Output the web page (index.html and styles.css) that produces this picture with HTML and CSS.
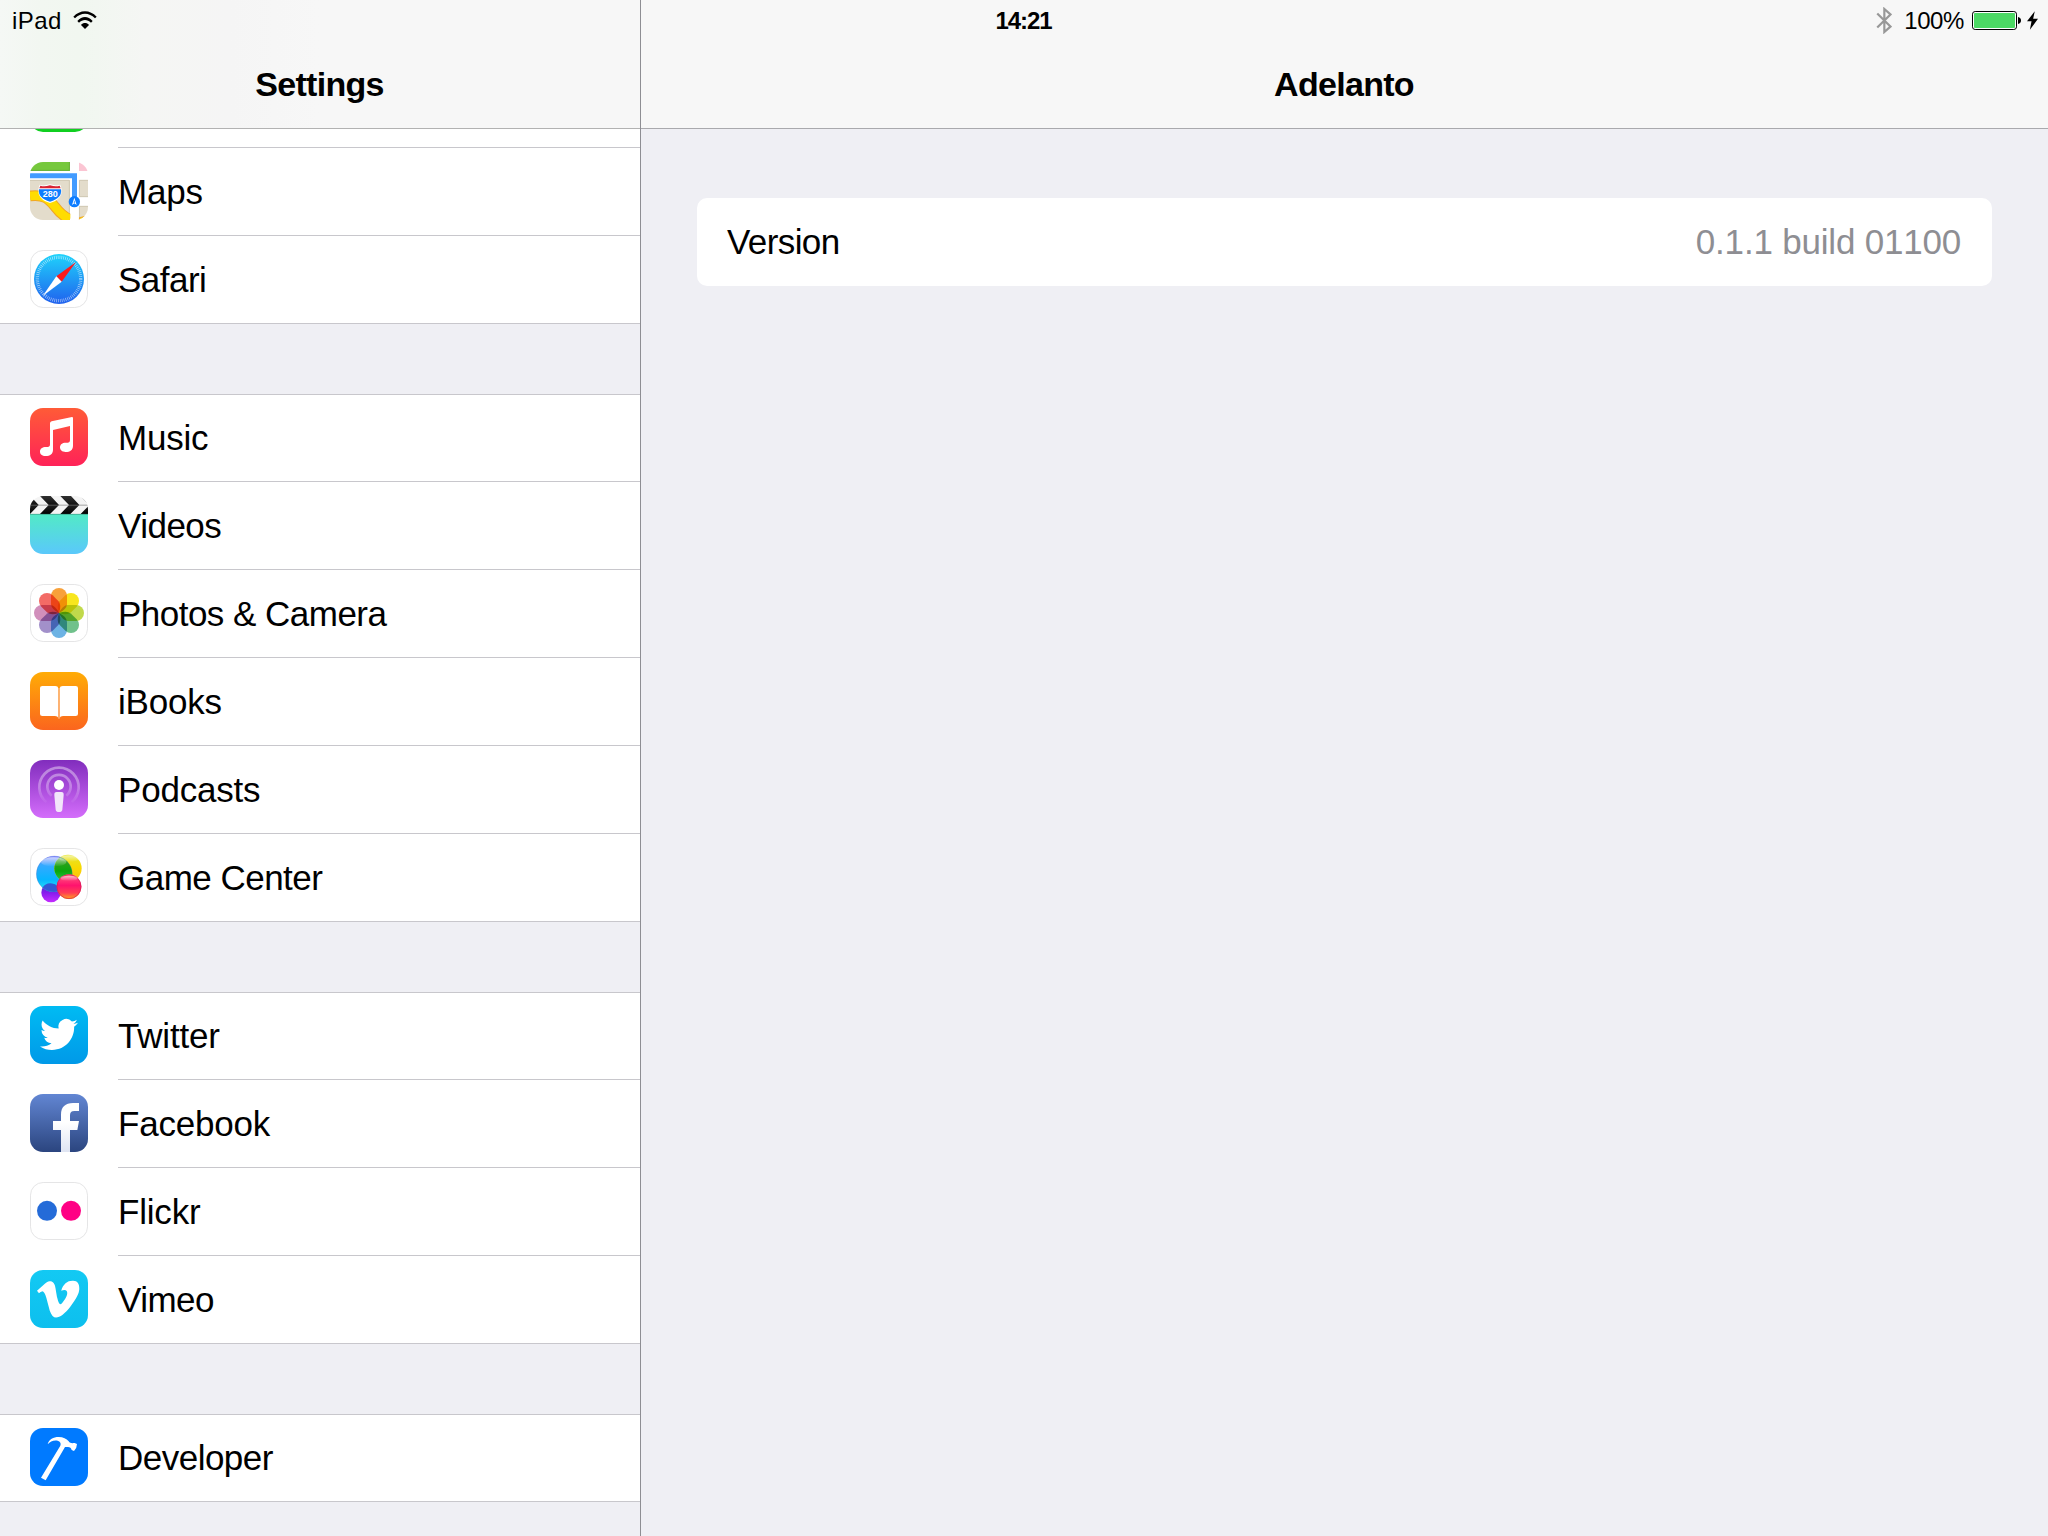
FILE: index.html
```html
<!DOCTYPE html>
<html lang="en">
<head>
<meta charset="utf-8">
<title>Settings</title>
<link rel="stylesheet" href="styles.css">
</head>
<body>
<div class="screen">
  <header class="status">
    <div class="status-side">
      <span class="device">iPad</span>
      <svg class="wifi" viewBox="0 0 72 54"><path d="M1 17C21-5 51-5 71 17L66 22C48 4 24 4 6 22ZM13 30C27 14 45 14 59 30L54 35C43 24 29 24 18 35ZM24 42C31 34 41 34 48 42L36 54Z"/></svg>
    </div>
    <span class="clock">14:21</span>
    <div class="status-side status-right">
      <svg class="bluetooth" viewBox="0 0 46 80"><path d="M3 19L42 58L24 74V6L42 22L3 61" fill="none" stroke="#989898" stroke-width="6.500"/></svg>
      <span class="percent">100%</span>
      <svg class="battery" viewBox="0 0 147 57"><rect x="1.5" y="1.5" width="132" height="54" rx="8" fill="#fff" stroke="#000" stroke-width="3"/><rect x="6" y="6" width="123" height="45" rx="3" fill="#4cd964"/><path d="M138 18Q147 20 147 28.500T138 39Z"/></svg>
      <svg class="bolt" viewBox="0 0 34 57"><path d="M24 0L0 31H14L9 57L34 23H19Z"/></svg>
    </div>
  </header>

  <aside class="sidebar">
    <div class="bar bar-side"><h1>Settings</h1></div>
    <nav class="list">
      <ul class="group group-first">
        <li class="row row-cut"><svg class="icon" viewBox="0 0 174 174"><rect width="174" height="174" rx="39" fill="#10cf20"/></svg></li>
        <li class="row">
          <svg class="icon" viewBox="0 0 174 174">
            <defs><clipPath id="tile"><rect width="174" height="174" rx="39"/></clipPath></defs>
            <g clip-path="url(#tile)">
              <rect width="174" height="174" fill="#fff"/>
              <path d="M0 0H120V27H0Z" fill="#76c83d"/><path d="M0 25H118V0" fill="none" stroke="#6aaf3c" stroke-width="3"/>
              <path d="M147 0H174V27H147Z" fill="#fbc5d3"/>
              <path d="M0 54H120V174H0ZM147 54H174V105H147ZM147 132H174V174H147Z" fill="#e3dccb"/>
              <path d="M0 55H118V174M174 55H148V104H174M174 133H148V174" fill="none" stroke="#cfc8b4" stroke-width="3"/>
              <path d="M0 102C45 96 58 114 75 134C88 151 102 164 120 172" fill="none" stroke="#f0a527" stroke-width="32"/>
              <path d="M0 102C45 96 58 114 75 134C88 151 102 164 120 172" fill="none" stroke="#ffdc00" stroke-width="26"/>
              <path d="M148 174V167Q160 165 174 160V174Z" fill="#ffdc00" stroke="#f0a527" stroke-width="3"/>
              <path d="M121 54H146V174H121Z" fill="#fff"/>
              <path d="M0 41H133.500V110" fill="none" stroke="#429bff" stroke-width="15"/>
              <path d="M29 68Q40 73 60 67Q80 73 91 68Q98 82 94 96Q87 116 60 123Q33 116 26 96Q22 82 29 68Z" fill="#fff"/>
              <path d="M31 71Q43 75 60 70Q77 75 89 71L92 79H28Z" fill="#d92332"/>
              <path d="M27 82H93Q97 109 60 119Q23 109 27 82Z" fill="#0d7dff"/>
              <text x="60.500" y="104" text-anchor="middle" class="shield">280</text>
              <circle cx="133" cy="119" r="17" fill="#0d7dff"/><path d="M133 107L140 129L133 124L126 129Z" fill="#fff"/><path d="M133 115L135 122L131 122Z" fill="#0d7dff"/>
            </g>
          </svg>
          <span class="label">Maps</span>
        </li>
        <li class="row">
          <svg class="icon" viewBox="0 0 174 174">
            <defs><linearGradient id="compass" x2="0" y2="1"><stop stop-color="#1fd3fb"/><stop offset="1" stop-color="#2061ee"/></linearGradient></defs>
            <rect x="1.500" y="1.500" width="171" height="171" rx="38" class="outline"/>
            <circle cx="87" cy="87" r="75" fill="url(#compass)"/>
            <circle cx="87" cy="87" r="65" fill="none" stroke="#fff" stroke-opacity=".62" stroke-width="10" stroke-dasharray="2 3.673"/>
            <path d="M138 36L79 79L95 95Z" fill="#fc1a1c"/><path d="M79 79L95 95L38 138Z" fill="#fff"/>
          </svg>
          <span class="label label-snug">Safari</span>
        </li>
      </ul>

      <ul class="group">
        <li class="row">
          <svg class="icon" viewBox="0 0 174 174">
            <defs><linearGradient id="music" x2="0" y2="1"><stop stop-color="#ff5b37"/><stop offset="1" stop-color="#ff2258"/></linearGradient></defs>
            <rect width="174" height="174" rx="39" fill="url(#music)"/>
            <path d="M60 46Q60 41 65 40L126 27Q129 27 129 30V113C129 126 120 132 107 132C96 132 90 126 90 118C90 109 97 104 107 104H114Q120 104 120 97V54L69 66V125C69 138 60 144 47 144C36 144 30 138 30 131C30 122 37 117 48 117H53Q60 117 60 109Z" fill="#fff"/>
          </svg>
          <span class="label">Music</span>
        </li>
        <li class="row">
          <svg class="icon" viewBox="0 0 174 174">
            <defs>
              <linearGradient id="video" x2="0" y2="1"><stop stop-color="#52eac6"/><stop offset="1" stop-color="#5ac8fb"/></linearGradient>
              <linearGradient id="slate" x2="0" y2="1"><stop stop-color="#303030"/><stop offset=".5" stop-color="#111"/><stop offset=".51" stop-color="#222"/><stop offset="1" stop-color="#000"/></linearGradient>
            </defs>
            <g clip-path="url(#tile)">
              <rect width="174" height="54" fill="#f4f4f4"/>
              <path d="M-31 0H1L26 27L0 54H-31ZM30 0H62L87 27L60 54H30L56 27ZM91 0H123L148 27L121 54H91L117 27ZM178 27L184 54H152Z" fill="url(#slate)"/>
              <path d="M0 27.500H174M152 0L178 27" stroke="#777" stroke-width="2"/>
              <rect y="54" width="174" height="120" fill="url(#video)"/>
              <path d="M0 55H174" stroke="#3c9480" stroke-width="2"/>
            </g>
          </svg>
          <span class="label label-snug">Videos</span>
        </li>
        <li class="row">
          <svg class="icon petals" viewBox="0 0 174 174">
            <rect x="1.500" y="1.500" width="171" height="171" rx="38" class="outline"/>
            <path d="M63 36A24 24 0 0 1 111 36V61Q110 76 87 87Q64 76 63 61Z" fill="#f8a13a"/>
            <path d="M63 36A24 24 0 0 1 111 36V61Q110 76 87 87Q64 76 63 61Z" fill="#f8e61e" transform="rotate(45 87 87)"/>
            <path d="M63 36A24 24 0 0 1 111 36V61Q110 76 87 87Q64 76 63 61Z" fill="#c1d94b" transform="rotate(90 87 87)"/>
            <path d="M63 36A24 24 0 0 1 111 36V61Q110 76 87 87Q64 76 63 61Z" fill="#70c18b" transform="rotate(135 87 87)"/>
            <path d="M63 36A24 24 0 0 1 111 36V61Q110 76 87 87Q64 76 63 61Z" fill="#6db3e4" transform="rotate(180 87 87)"/>
            <path d="M63 36A24 24 0 0 1 111 36V61Q110 76 87 87Q64 76 63 61Z" fill="#a290ca" transform="rotate(225 87 87)"/>
            <path d="M63 36A24 24 0 0 1 111 36V61Q110 76 87 87Q64 76 63 61Z" fill="#d18fbb" transform="rotate(270 87 87)"/>
            <path d="M63 36A24 24 0 0 1 111 36V61Q110 76 87 87Q64 76 63 61Z" fill="#f36b66" transform="rotate(315 87 87)"/>
          </svg>
          <span class="label label-snug">Photos &amp; Camera</span>
        </li>
        <li class="row">
          <svg class="icon" viewBox="0 0 174 174">
            <defs><linearGradient id="books" x2="0" y2="1"><stop stop-color="#ffac06"/><stop offset="1" stop-color="#fb651e"/></linearGradient></defs>
            <rect width="174" height="174" rx="39" fill="url(#books)"/>
            <path d="M37 42H76Q84 42 85 49V137Q83 132 75 132H37Q30 132 30 126V48Q30 42 37 42ZM137 42H98Q90 42 89 49V137Q91 132 99 132H137Q144 132 144 126V48Q144 42 137 42Z" fill="#fff"/>
            <path d="M87 48V140" stroke="#fdb57c" stroke-width="4"/>
          </svg>
          <span class="label">iBooks</span>
        </li>
        <li class="row">
          <svg class="icon" viewBox="0 0 174 174">
            <defs>
              <linearGradient id="pod" x2="0" y2="1"><stop stop-color="#812dbd"/><stop offset="1" stop-color="#d46dfb"/></linearGradient>
              <linearGradient id="wave" gradientUnits="userSpaceOnUse" x1="0" y1="20" x2="0" y2="135"><stop stop-color="#fff" stop-opacity=".42"/><stop offset=".5" stop-color="#fff" stop-opacity=".32"/><stop offset="1" stop-color="#fff" stop-opacity="0"/></linearGradient>
            </defs>
            <rect width="174" height="174" rx="39" fill="url(#pod)"/>
            <path d="M49 127A59 59 0 1 1 125 127M65 107A35 35 0 1 1 109 107" fill="none" stroke="url(#wave)" stroke-width="8"/>
            <circle cx="87" cy="75" r="15" fill="#fff"/>
            <path d="M80 96H94Q102 96 101 106L97 149Q96 156 87 156Q78 156 77 149L73 106Q72 96 80 96Z" fill="#f2e5fa"/>
          </svg>
          <span class="label">Podcasts</span>
        </li>
        <li class="row">
          <svg class="icon" viewBox="0 0 174 174">
            <defs>
              <linearGradient id="b1" x2="0" y2="1"><stop stop-color="#8a8cff"/><stop offset=".25" stop-color="#35a9ff"/><stop offset=".65" stop-color="#08b4ff"/><stop offset="1" stop-color="#2cecf5"/></linearGradient>
              <linearGradient id="b2" x2="0" y2="1"><stop stop-color="#e5e62b"/><stop offset=".5" stop-color="#f8d800"/><stop offset="1" stop-color="#ffb818"/></linearGradient>
              <linearGradient id="b3" x2="0" y2="1"><stop stop-color="#ff5f7f"/><stop offset=".45" stop-color="#ff126e"/><stop offset=".75" stop-color="#ff3d55"/><stop offset="1" stop-color="#ffa51c"/></linearGradient>
              <linearGradient id="b4" x2="0" y2="1"><stop stop-color="#393bc6"/><stop offset=".5" stop-color="#871bed"/><stop offset="1" stop-color="#c52cff"/></linearGradient>
              <linearGradient id="b5" x2="0" y2="1"><stop stop-color="#4b9d28"/><stop offset=".6" stop-color="#0ba70d"/><stop offset="1" stop-color="#28c850"/></linearGradient>
              <linearGradient id="gloss" x2="0" y2="1"><stop stop-color="#fff" stop-opacity=".6"/><stop offset="1" stop-color="#fff" stop-opacity="0"/></linearGradient>
              <clipPath id="overlap"><circle cx="73" cy="78" r="54"/></clipPath>
            </defs>
            <rect x="1.500" y="1.500" width="171" height="171" rx="38" class="outline"/>
            <circle cx="63" cy="134" r="29" fill="url(#b4)"/>
            <circle cx="73" cy="78" r="54" fill="url(#b1)"/>
            <path d="M35 116A54 54 0 0 0 90 129A29 29 0 0 0 37 120Z" fill="#3557d5"/>
            <circle cx="114" cy="61" r="41" fill="url(#b2)"/>
            <circle cx="114" cy="61" r="41" fill="url(#b5)" clip-path="url(#overlap)"/>
            <circle cx="73" cy="78" r="53.500" fill="none" stroke="#526ecc" stroke-opacity=".6" stroke-width="1.500"/>
            <ellipse cx="71" cy="42" rx="38" ry="14" fill="url(#gloss)"/>
            <ellipse cx="117" cy="32" rx="29" ry="10" fill="url(#gloss)"/>
            <circle cx="117" cy="116" r="37" fill="url(#b3)"/>
            <circle cx="117" cy="116" r="36" fill="none" stroke="#d31952" stroke-width="2"/>
            <ellipse cx="117" cy="91" rx="26" ry="8" fill="url(#gloss)"/>
          </svg>
          <span class="label label-snug">Game Center</span>
        </li>
      </ul>

      <ul class="group">
        <li class="row">
          <svg class="icon" viewBox="0 0 174 174">
            <defs><linearGradient id="tw" x2="0" y2="1"><stop stop-color="#00bbf3"/><stop offset="1" stop-color="#0099e8"/></linearGradient></defs>
            <rect width="174" height="174" rx="39" fill="url(#tw)"/>
            <path transform="translate(30 28.500) scale(4.750)" fill="#fff" d="M23.953 4.570a10 10 0 0 1-2.825.775 4.958 4.958 0 0 0 2.163-2.723c-.951.555-2.005.959-3.127 1.184a4.920 4.920 0 0 0-8.384 4.482C7.690 8.095 4.067 6.130 1.640 3.162a4.822 4.822 0 0 0-.666 2.475c0 1.710.870 3.213 2.188 4.096a4.904 4.904 0 0 1-2.228-.616v.060a4.923 4.923 0 0 0 3.946 4.827 4.996 4.996 0 0 1-2.212.085 4.936 4.936 0 0 0 4.604 3.417 9.867 9.867 0 0 1-6.102 2.105c-.390 0-.779-.023-1.170-.067a13.995 13.995 0 0 0 7.557 2.209c9.053 0 13.998-7.496 13.998-13.985 0-.210 0-.420-.015-.630a9.935 9.935 0 0 0 2.460-2.548z"/>
          </svg>
          <span class="label">Twitter</span>
        </li>
        <li class="row">
          <svg class="icon" viewBox="0 0 174 174">
            <defs>
              <linearGradient id="fb" x2="0" y2="1"><stop stop-color="#6286d3"/><stop offset="1" stop-color="#2b457f"/></linearGradient>
              <linearGradient id="fl" x2="0" y2="1"><stop offset=".4" stop-color="#fff"/><stop offset="1" stop-color="#dfe4f2"/></linearGradient>
            </defs>
            <rect width="174" height="174" rx="39" fill="url(#fb)"/>
            <path d="M93 174V108H69V81H93V62C93 39 106 27 129 27H147V51H133C124 51 120 55 120 64V81H147L142 108H120V174Z" fill="url(#fl)"/>
          </svg>
          <span class="label">Facebook</span>
        </li>
        <li class="row">
          <svg class="icon" viewBox="0 0 174 174">
            <rect x="1.500" y="1.500" width="171" height="171" rx="38" class="outline"/>
            <circle cx="51" cy="86.500" r="30" fill="#246bd8"/><circle cx="123" cy="86.500" r="30" fill="#ff0084"/>
          </svg>
          <span class="label">Flickr</span>
        </li>
        <li class="row">
          <svg class="icon" viewBox="0 0 174 174">
            <defs><linearGradient id="vm" x2="0" y2="1"><stop stop-color="#13c9f3"/><stop offset="1" stop-color="#0dbfee"/></linearGradient></defs>
            <rect width="174" height="174" rx="39" fill="url(#vm)"/>
            <path transform="translate(21 24) scale(5.290)" fill="#fff" d="M23.977 6.416c-.105 2.338-1.739 5.543-4.894 9.609-3.268 4.247-6.026 6.370-8.290 6.370-1.409 0-2.578-1.294-3.553-3.881L5.322 11.400C4.603 8.816 3.834 7.522 3.010 7.522c-.179 0-.806.378-1.881 1.132L0 7.197c1.185-1.044 2.351-2.084 3.501-3.128C5.080 2.701 6.266 1.984 7.055 1.910c1.867-.180 3.016 1.100 3.447 3.838.465 2.953.789 4.789.971 5.507.539 2.450 1.131 3.674 1.776 3.674.502 0 1.256-.796 2.265-2.385 1.004-1.589 1.540-2.797 1.612-3.628.144-1.371-.395-2.061-1.614-2.061-.574 0-1.167.121-1.777.391 1.186-3.868 3.434-5.757 6.762-5.637 2.473.060 3.628 1.664 3.493 4.797z"/>
          </svg>
          <span class="label label-snug">Vimeo</span>
        </li>
      </ul>

      <ul class="group">
        <li class="row">
          <svg class="icon" viewBox="0 0 174 174">
            <rect width="174" height="174" rx="39" fill="#007aff"/>
            <path d="M53 49C57 34 70 27 86 27C100 27 109 32 116 40C120 46 126 46 134 45L141 48Q141 59 132 69L125 66Q123 57 114 57L105 57L47 157L33 149L91 53Q95 42 83 38C70 36 61 40 53 49Z" fill="#fff"/>
          </svg>
          <span class="label label-snug">Developer</span>
        </li>
      </ul>
    </nav>
  </aside>

  <main class="detail">
    <div class="bar bar-detail"><h2>Adelanto</h2></div>
    <div class="card">
      <span class="key">Version</span>
      <span class="value">0.1.1 build 01100</span>
    </div>
  </main>
</div>
</body>
</html>
```
FILE: styles.css
```css
* { box-sizing: border-box; }

body {
  margin: 0;
  background: #efeff4;
  color: #000;
  font: 35px/40px "Liberation Sans", Arial, sans-serif;
}

h1, h2 {
  margin: 0;
  padding-right: 1px;
  font-size: 34px;
  font-weight: 700;
  letter-spacing: -0.7px;
}

.screen {
  position: relative;
  display: flex;
  width: 2048px;
  height: 1536px;
  overflow: hidden;
}

/* Status bar floats over both navigation bars */
.status {
  position: absolute;
  inset: 0 0 auto 0;
  display: grid;
  grid-template-columns: 1fr auto 1fr;
  align-items: center;
  height: 40px;
  padding: 0 10px 0 11px;
  font-size: 24px;
  line-height: 36px;
}
.status span { padding-top: 2px; }
.status-side { display: flex; align-items: center; gap: 11px; }
.status-right { justify-content: flex-end; gap: 0; }
.status .device { padding-left: 1px; letter-spacing: 0.4px; }
.clock { padding-right: 2px; font-weight: 700; letter-spacing: -1.1px; }
.wifi { width: 24px; height: 18px; }
.bluetooth { width: 16px; height: 27px; margin-right: 12px; }
.percent { margin-right: 8px; letter-spacing: -0.4px; }
.battery { width: 49px; height: 19px; margin-right: 6px; }
.bolt { width: 11px; height: 19px; }

.bar {
  display: flex;
  justify-content: center;
  height: 129px;
  padding-top: 64px;
  border-bottom: 1px solid #b2b2b2;
  background: #f7f7f7;
}
.bar-side {
  background: linear-gradient(90deg, #f5f8f5 0, #f2f7f1 40px, #f1f7f0 80px, #f5f6f4 145px, #f5f5f5 230px, #f7f7f7 320px);
}
.bar-detail { border-color: #a9a9ad; }

.sidebar {
  width: 641px;
  border-right: 1px solid #8e8e93;
}

.list {
  display: flex;
  flex-direction: column;
  gap: 70px;
}
.group {
  margin: 0;
  padding: 0;
  list-style: none;
  background: linear-gradient(#c8c7cc, #c8c7cc) top / 100% 1px no-repeat,
              linear-gradient(#c8c7cc, #c8c7cc) bottom / 100% 1px no-repeat, #fff;
}
.group-first {
  background: linear-gradient(#c8c7cc, #c8c7cc) bottom / 100% 1px no-repeat, #fff;
}
.row {
  display: flex;
  align-items: flex-start;
  gap: 30px;
  height: 88px;
  padding: 14px 0 0 30px;
  background: linear-gradient(#c8c7cc, #c8c7cc) 118px bottom / 100% 1px no-repeat;
}
.row:last-child { background: none; }
.row-cut {
  align-items: flex-end;
  height: 19px;
  padding: 0 0 16px 30px;
  overflow: hidden;
}

.icon { flex: none; width: 58px; height: 58px; }
.outline { fill: #fff; stroke: #e5e5e6; stroke-width: 3; }
.petals { isolation: isolate; }
.petals path { mix-blend-mode: multiply; }
.shield { font: 700 27px "Liberation Sans", Arial, sans-serif; fill: #fff; }
.label { padding-top: 10px; letter-spacing: -0.2px; }
.label-snug { letter-spacing: -0.52px; }

.detail { flex: 1; }
.card {
  display: flex;
  justify-content: space-between;
  align-items: center;
  height: 88px;
  margin: 69px 56px 0;
  padding: 0 30px;
  border-radius: 10px;
  background: #fff;
}
.key { letter-spacing: -0.6px; }
.value {
  padding-right: 1px;
  color: #8e8e93;
  font-kerning: none;
  letter-spacing: -0.2px;
}
```
